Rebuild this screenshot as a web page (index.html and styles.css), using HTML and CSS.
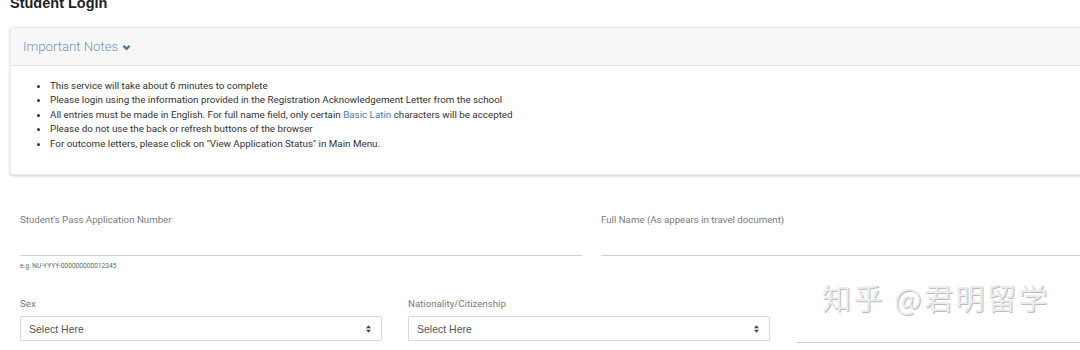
FILE: index.html
```html
<!DOCTYPE html>
<html lang="en">
<head>
    <meta charset="UTF-8">
    <meta name="viewport" content="width=device-width, initial-scale=1.0">
    <title>Student Login</title>
    <link rel="stylesheet" href="styles.css">
</head>
<body>
    <div class="page">
        <h2>Student Login</h2>

        <div class="notes-card">
            <div class="notes-header">
                Important Notes
                <svg class="chevron" width="9" height="7" viewBox="0 0 10 7">
                    <polyline points="1.5 1.5 5 5 8.5 1.5" fill="none" stroke="currentColor" stroke-width="2.4"></polyline>
                </svg>
            </div>
            <div class="notes-body">
                <ul>
                    <li>This service will take about 6 minutes to complete</li>
                    <li>Please login using the information provided in the Registration Acknowledgement Letter from the school</li>
                    <li>All entries must be made in English. For full name field, only certain <a href="#">Basic Latin</a> characters will be accepted</li>
                    <li>Please do not use the back or refresh buttons of the browser</li>
                    <li>For outcome letters, please click on "View Application Status" in Main Menu.</li>
                </ul>
            </div>
        </div>

        <form class="login-form">
            <div class="form-row two">
                <div class="form-group">
                    <label for="passNo">Student's Pass Application Number</label>
                    <input type="text" id="passNo" class="line-input">
                    <div class="input-help">e.g. NU-YYYY-000000000012345</div>
                </div>
                <div class="form-group">
                    <label for="fullName">Full Name (As appears in travel document)</label>
                    <input type="text" id="fullName" class="line-input">
                </div>
            </div>

            <div class="form-row three">
                <div class="form-group">
                    <label for="sex">Sex</label>
                    <div class="select-box">
                        <span>Select Here</span>
                        <svg class="arrows" width="5" height="8" viewBox="0 0 6 9">
                            <polygon points="3 0 6 3.5 0 3.5" fill="#444"></polygon>
                            <polygon points="0 5.5 6 5.5 3 9" fill="#444"></polygon>
                        </svg>
                    </div>
                </div>
                <div class="form-group">
                    <label for="nationality">Nationality/Citizenship</label>
                    <div class="select-box">
                        <span>Select Here</span>
                        <svg class="arrows" width="5" height="8" viewBox="0 0 6 9">
                            <polygon points="3 0 6 3.5 0 3.5" fill="#444"></polygon>
                            <polygon points="0 5.5 6 5.5 3 9" fill="#444"></polygon>
                        </svg>
                    </div>
                </div>
                <div class="form-group">
                    <label class="empty-label">&nbsp;</label>
                    <input type="text" class="line-input short">
                </div>
            </div>
        </form>

        <div class="watermark">知乎 @君明留学</div>
    </div>
</body>
</html>
```

FILE: styles.css
```css
html, body {
    overflow: hidden;
}

body {
    margin: 0;
    background: #fff;
    font-family: Roboto, "Liberation Sans", sans-serif;
    color: #333;
}

.page {
    position: relative;
    width: 1170px;
    padding: 0 0 0 10px;
}

h2 {
    margin: -7px 0 14px;
    font-family: "Liberation Sans", Arial, sans-serif;
    font-size: 14.5px;
    line-height: 20px;
    font-weight: bold;
    color: #222;
}

.notes-card {
    background: #fff;
    border: 1px solid #ececec;
    border-radius: 3px;
    box-shadow: 0 1px 3px rgba(0, 0, 0, 0.2);
}

.notes-header {
    display: flex;
    align-items: center;
    gap: 4px;
    height: 37px;
    padding: 0 12px;
    background: #f7f7f7;
    border-bottom: 1px solid #e4e4e4;
    font-size: 13.2px;
    font-weight: 300;
    color: #7392b8;
}

.chevron {
    color: #3a78b5;
    margin-top: 1px;
}

.notes-body {
    padding: 13px 0 23px;
}

.notes-body ul {
    margin: 0;
    padding-left: 39px;
    font-size: 9.8px;
    line-height: 14.4px;
    color: #333;
}

.notes-body li::marker {
    font-size: 11px;
}

.notes-body a {
    color: #3c7ab8;
    text-decoration: none;
}

.login-form {
    padding: 38px 0 0 10px;
}

.form-row {
    display: grid;
}

.form-row.two {
    grid-template-columns: 562px 562px;
    column-gap: 19px;
}

.form-row.three {
    grid-template-columns: 362px 362px 362px;
    column-gap: 26px;
    margin-top: 26px;
}

.form-group {
    display: flex;
    flex-direction: column;
}

label {
    display: block;
    font-size: 9.7px;
    line-height: 14px;
    color: #7a7a7a;
}

.line-input {
    height: 29px;
    margin: 0;
    padding: 0;
    border: none;
    border-bottom: 1px solid #d0d0d0;
    box-sizing: border-box;
    outline: none;
    background: transparent;
}

.line-input.short {
    margin-top: 5px;
    height: 27px;
}

.input-help {
    margin-top: 5px;
    font-size: 6.6px;
    line-height: 10px;
    color: #666;
}

.select-box {
    display: flex;
    align-items: center;
    justify-content: space-between;
    height: 25px;
    margin-top: 5px;
    padding: 0 10px 0 8px;
    border: 1px solid #d8d8d8;
    border-radius: 2px;
    box-sizing: border-box;
    font-family: "Liberation Sans", Arial, sans-serif;
    font-size: 10.5px;
    color: #555;
}

.watermark {
    position: absolute;
    left: 822px;
    top: 290px;
    font-family: "Noto Sans CJK SC", sans-serif;
    font-size: 29px;
    line-height: 1;
    letter-spacing: 2.5px;
    color: #ececec;
    text-shadow: 1px 1px 0 #bdbdbd;
    pointer-events: none;
}
```
